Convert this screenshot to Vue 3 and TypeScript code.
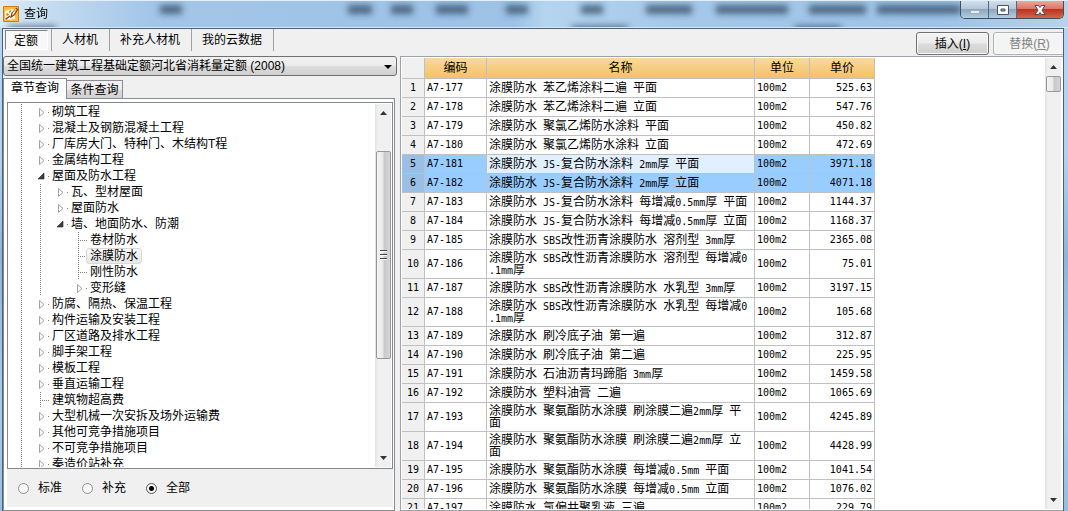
<script setup lang="ts">
import { ref } from 'vue'

interface TreeNode { label: string; level: number; kind: 'closed' | 'open' | 'leaf' }
interface Quota { code: string; name: string; price: string }

const tools = ['定额', '人材机', '补充人材机', '我的云数据']
const activeTool = ref('定额')
const pages = ['章节查询', '条件查询']
const activePage = ref('章节查询')
const scope = ref('全部')
const scopes = ['标准', '补充', '全部']
const library = ref('全国统一建筑工程基础定额河北省消耗量定额 (2008)')
const selectedNode = ref('涂膜防水')
const selectedCodes = ref(['A7-181', 'A7-182'])
const currentCode = ref('A7-181')

const nodes: TreeNode[] = [
  { label: '砌筑工程', level: 1, kind: 'closed' },
  { label: '混凝土及钢筋混凝土工程', level: 1, kind: 'closed' },
  { label: '厂库房大门、特种门、木结构T程', level: 1, kind: 'closed' },
  { label: '金属结构工程', level: 1, kind: 'closed' },
  { label: '屋面及防水工程', level: 1, kind: 'open' },
  { label: '瓦、型材屋面', level: 2, kind: 'closed' },
  { label: '屋面防水', level: 2, kind: 'closed' },
  { label: '墙、地面防水、防潮', level: 2, kind: 'open' },
  { label: '卷材防水', level: 3, kind: 'leaf' },
  { label: '涂膜防水', level: 3, kind: 'leaf' },
  { label: '刚性防水', level: 3, kind: 'leaf' },
  { label: '变形缝', level: 3, kind: 'closed' },
  { label: '防腐、隔热、保温工程', level: 1, kind: 'closed' },
  { label: '构件运输及安装工程', level: 1, kind: 'closed' },
  { label: '厂区道路及排水工程', level: 1, kind: 'closed' },
  { label: '脚手架工程', level: 1, kind: 'closed' },
  { label: '模板工程', level: 1, kind: 'closed' },
  { label: '垂直运输工程', level: 1, kind: 'closed' },
  { label: '建筑物超高费', level: 1, kind: 'leaf' },
  { label: '大型机械一次安拆及场外运输费', level: 1, kind: 'closed' },
  { label: '其他可竞争措施项目', level: 1, kind: 'closed' },
  { label: '不可竞争措施项目', level: 1, kind: 'closed' },
  { label: '秦造价站补充', level: 1, kind: 'closed' },
]

const quotas: Quota[] = [
  { code: 'A7-177', name: '涂膜防水 苯乙烯涂料二遍 平面', price: '525.63' },
  { code: 'A7-178', name: '涂膜防水 苯乙烯涂料二遍 立面', price: '547.76' },
  { code: 'A7-179', name: '涂膜防水 聚氯乙烯防水涂料 平面', price: '450.82' },
  { code: 'A7-180', name: '涂膜防水 聚氯乙烯防水涂料 立面', price: '472.69' },
  { code: 'A7-181', name: '涂膜防水 JS-复合防水涂料 2mm厚 平面', price: '3971.18' },
  { code: 'A7-182', name: '涂膜防水 JS-复合防水涂料 2mm厚 立面', price: '4071.18' },
  { code: 'A7-183', name: '涂膜防水 JS-复合防水涂料 每增减0.5mm厚 平面', price: '1144.37' },
  { code: 'A7-184', name: '涂膜防水 JS-复合防水涂料 每增减0.5mm厚 立面', price: '1168.37' },
  { code: 'A7-185', name: '涂膜防水 SBS改性沥青涂膜防水 溶剂型 3mm厚', price: '2365.08' },
  { code: 'A7-186', name: '涂膜防水 SBS改性沥青涂膜防水 溶剂型 每增减0\n.1mm厚', price: '75.01' },
  { code: 'A7-187', name: '涂膜防水 SBS改性沥青涂膜防水 水乳型 3mm厚', price: '3197.15' },
  { code: 'A7-188', name: '涂膜防水 SBS改性沥青涂膜防水 水乳型 每增减0\n.1mm厚', price: '105.68' },
  { code: 'A7-189', name: '涂膜防水 刷冷底子油 第一遍', price: '312.87' },
  { code: 'A7-190', name: '涂膜防水 刷冷底子油 第二遍', price: '225.95' },
  { code: 'A7-191', name: '涂膜防水 石油沥青玛蹄脂 3mm厚', price: '1459.58' },
  { code: 'A7-192', name: '涂膜防水 塑料油膏 二遍', price: '1065.69' },
  { code: 'A7-193', name: '涂膜防水 聚氨酯防水涂膜 刷涂膜二遍2mm厚 平\n面', price: '4245.89' },
  { code: 'A7-194', name: '涂膜防水 聚氨酯防水涂膜 刷涂膜二遍2mm厚 立\n面', price: '4428.99' },
  { code: 'A7-195', name: '涂膜防水 聚氨酯防水涂膜 每增减0.5mm 平面', price: '1041.54' },
  { code: 'A7-196', name: '涂膜防水 聚氨酯防水涂膜 每增减0.5mm 立面', price: '1076.02' },
  { code: 'A7-197', name: '涂膜防水 氯偏共聚乳液 三遍', price: '229.79' },
]

// Splits a name into Chinese runs and half-width runs
function runs(text: string) {
  return text.split(/([\x20-\x7e]+)/).filter(Boolean).map(t => ({ text: t, half: /^[\x20-\x7e]/.test(t) }))
}

function pick(code: string) {
  selectedCodes.value = [code]
  currentCode.value = code
}
</script>

<template>
  <div class="window">
    <header class="titlebar">
      <svg class="glass" aria-hidden="true">
        <defs><filter id="soft" x="-20%" y="-80%" width="140%" height="260%"><feGaussianBlur stdDeviation="3" /></filter></defs>
        <g filter="url(#soft)" fill="#1c3450">
          <path opacity=".65" d="M160 4h22v9h-22zM348 4h24v9h-24zM391 4h22v9h-22zM436 4h32v9h-32zM506 4h22v9h-22zM581 4h22v9h-22zM646 4h46v9h-46zM716 4h72v9h-72zM809 4h57v9h-57zM877 4h84v9h-84z" />
          <path opacity=".7" d="M8 25h48v6H8zM572 25h56v6h-56zM795 25h46v6h-46z" />
        </g>
      </svg>
      <svg class="logo" viewBox="0 0 16 16" aria-hidden="true">
        <rect width="16" height="16" rx="1" fill="#d9780a" />
        <rect x="1" y="1" width="14" height="14" fill="#f8bd3c" />
        <path d="M2 5l7-2 3 1v9l-7 1-3-3z" fill="#fffbe8" />
        <path d="M3 8l2-1 1 2-2 1zM6 5l2-1v2l-2 1zM7 10l2 1" fill="#d58518" />
        <path d="M14 2L9 7l-1 4 3-2 4-6M3 13l4-3" fill="none" stroke="#8f3b08" stroke-width="1.2" />
        <path d="M13 3l-3 4" stroke="#fff2aa" />
      </svg>
      <h1>查询</h1>
      <div class="controls">
        <button aria-label="最小化"><svg viewBox="0 0 14 12"><rect x="2.5" y="6.5" width="9" height="3" fill="#e8edf1" stroke="#a2afba" /></svg></button>
        <button aria-label="最大化"><svg viewBox="0 0 14 12"><path fill-rule="evenodd" d="M1.5 1.5h11v9h-11zM5 5v2h4V5z" fill="#fff" stroke="#485664" /></svg></button>
        <button class="close" aria-label="关闭"><svg viewBox="0 0 14 12"><path d="M2 1.500h3.500L7 3.500l1.500-2H12L9 6l3 4.500H8.500L7 8.500l-1.500 2H2L5 6z" fill="#fff" stroke="#59444a" /></svg></button>
      </div>
    </header>

    <div class="client">
      <div class="toolbar">
        <nav class="tools">
          <div v-for="t in tools" :key="t" class="tool-cell">
            <button :class="{ pressed: t === activeTool }" @click="activeTool = t">{{ t }}</button>
          </div>
        </nav>
        <div class="actions">
          <button class="action">插入<span>(<u>I</u>)</span></button>
          <button class="action" disabled>替换<span>(<u>R</u>)</span></button>
        </div>
      </div>

      <main class="content">
        <section class="side">
          <div class="combo">
            <select v-model="library" aria-label="定额库"><option>{{ library }}</option></select>
            <svg viewBox="0 0 8 4" aria-hidden="true"><path d="M0 0h8L4 4z" /></svg>
          </div>
          <div class="pages" role="tablist">
            <button v-for="p in pages" :key="p" role="tab" :aria-selected="p === activePage" :class="{ active: p === activePage }" @click="activePage = p">{{ p }}</button>
          </div>
          <div class="page">
            <div class="tree">
              <ul>
                <li v-for="n in nodes" :key="n.label">
                  <i v-for="g in n.level" :key="g" class="guide" :class="{ line: g < 3 }"></i>
                  <svg class="twisty" viewBox="0 0 12 16" aria-hidden="true">
                    <template v-if="n.kind === 'leaf'">
                      <path d="M.5 0v16" class="dots" />
                      <path d="M2 8.500h8" class="dots" />
                    </template>
                    <template v-else>
                      <path v-if="n.kind === 'closed'" d="M-.5 4.500v8l4.500-4z" fill="#fff" stroke="#a0a0a0" />
                      <path v-else d="M4 5v6h-6z" fill="#404040" stroke="#222" stroke-width=".6" />
                      <path d="M8 8h1v1H8z" fill="#808080" />
                    </template>
                  </svg>
                  <button :class="{ selected: n.label === selectedNode }" @click="selectedNode = n.label">{{ n.label }}</button>
                </li>
              </ul>
              <div class="scroll" aria-hidden="true">
                <svg class="arrow" viewBox="0 0 7 4"><path d="M0 4h7L3.500 0z" /></svg>
                <div class="track"><div class="thumb tree-thumb"><i></i><i></i><i></i></div></div>
                <svg class="arrow" viewBox="0 0 7 4"><path d="M0 0h7L3.500 4z" /></svg>
              </div>
            </div>
            <div class="scopes">
              <label v-for="s in scopes" :key="s"><input v-model="scope" type="radio" name="scope" :value="s">{{ s }}</label>
            </div>
          </div>
        </section>

        <section class="grid">
          <div class="sheet">
            <table>
              <colgroup><col class="c-no"><col class="c-code"><col class="c-name"><col class="c-unit"><col class="c-price"></colgroup>
              <thead>
                <tr><th class="corner"></th><th>编码</th><th>名称</th><th>单位</th><th>单价</th></tr>
              </thead>
              <tbody>
                <tr v-for="(q, i) in quotas" :key="q.code" :class="{ selected: selectedCodes.includes(q.code), current: q.code === currentCode }" @click="pick(q.code)">
                  <th scope="row" class="half">{{ i + 1 }}</th>
                  <td class="half">{{ q.code }}</td>
                  <td class="name"><span v-for="(r, k) in runs(q.name)" :key="k" :class="{ half: r.half }">{{ r.text }}</span></td>
                  <td class="half">100m2</td>
                  <td class="half price">{{ q.price }}</td>
                </tr>
              </tbody>
            </table>
          </div>
          <div class="scroll" aria-hidden="true">
            <svg class="arrow" viewBox="0 0 7 4"><path d="M0 4h7L3.500 0z" /></svg>
            <div class="track"><div class="thumb grid-thumb"></div></div>
            <svg class="arrow" viewBox="0 0 7 4"><path d="M0 0h7L3.500 4z" /></svg>
          </div>
        </section>
      </main>
    </div>
  </div>
</template>

<style>
body { margin: 0; overflow: hidden; }
</style>

<style scoped>
* { box-sizing: border-box; }
button, select, input { font: inherit; color: inherit; margin: 0; }
button { padding: 0; border: 0; background: none; white-space: nowrap; }
.window {
  display: flex; flex-direction: column; height: 100vh; padding: 0 4px 0 2px; overflow: hidden;
  font: 12px/16px "Liberation Sans", "Noto Sans CJK SC", sans-serif; color: #000;
  background: linear-gradient(#b5d5f1, #b2d2f0 30%, #8fb5dc 50%, #a9ccec 80%, #96bde3);
}
.titlebar {
  position: relative; display: flex; align-items: center; flex: none; height: 28px; margin: 0 -4px 0 -2px;
  border-top: 1px solid #e4eef7; border-bottom: 1px solid #d5e7f8;
  background: linear-gradient(90deg, #dcebf8, #c3dbf0 5%, #a3c6e8 14%, #9dc2e6 48%, #b4d4ef 51%, #a5c8e9 64%, #9ec3e6 88%, #b8d2ea);
}
.glass { position: absolute; left: 0; top: 0; width: 100%; height: 100%; }
.logo { position: relative; width: 16px; height: 16px; margin-left: 3px; }
h1 { position: relative; margin: 0 auto 0 5px; font: inherit; }
.controls {
  position: relative; display: flex; align-self: flex-start; height: 18px; margin-right: 4px;
  border: 1px solid #3e4f61; border-top: 0; border-radius: 0 0 5px 5px; overflow: hidden;
}
.controls button { width: 28px; border-right: 1px solid #566a7f; background: linear-gradient(#cfdfee, #b5c8da 45%, #8da7bf 50%, #b2cce2); }
.controls button.close { width: 46px; border: 0; background: linear-gradient(#e9a99c, #d97767 45%, #bd331e 50%, #cf6650); }
.controls svg { display: block; width: 14px; height: 12px; margin: 0 auto; }

.client { display: flex; flex-direction: column; flex: 1; min-height: 0; border: 1px solid #4c6078; border-bottom: 0; background: #f0f0f0; }
.toolbar { display: flex; justify-content: space-between; flex: none; height: 27px; overflow: hidden; }
.tools { display: flex; }
.tool-cell { height: 22px; padding: 1px 3px 0 2px; border-right: 1px solid #a0a0a0; }
.tool-cell button { height: 20px; padding: 0 8px; }
.tool-cell button.pressed {
  border: 1px solid; border-color: #808080 #fff #fff #808080; background: #f8f8f8; padding: 2px 9px 0 8px;
}
.actions { display: flex; gap: 4px; padding-top: 3px; margin-right: -3px; }
.action {
  width: 73px; height: 23px; border: 1px solid #707070; border-radius: 3px;
  background: linear-gradient(#f4f4f4, #ebebeb 48%, #dcdcdc 52%, #cfcfcf); box-shadow: inset 0 0 0 1px #fafafa;
}
.action:disabled { color: #838383; border-color: #adb2b5; background: #f4f4f4; }

.content { display: flex; gap: 3px; flex: 1; min-height: 0; }
.side { display: flex; flex-direction: column; flex: none; width: 394px; }
.combo { position: relative; height: 20px; flex: none; }
.combo select {
  display: block; appearance: none; width: 100%; height: 20px; padding: 0 20px 0 3px; border: 1px solid #707070; border-radius: 3px;
  background: linear-gradient(#f2f2f2, #ebebeb 48%, #dddddd 52%, #cfcfcf);
}
.combo svg { position: absolute; right: 5px; top: 9px; width: 8px; height: 4px; }
.pages { display: flex; align-items: flex-end; flex: none; height: 22px; padding-top: 2px; margin-right: 2px; }
.pages button { height: 18px; width: 56px; padding: 0 2px; border: 1px solid #898c95; border-left: 0; border-bottom: 0; background: linear-gradient(#f2f2f2, #ebebeb 50%, #dcdcdc 52%, #d0d0d0); }
.pages button.active { position: relative; height: 21px; width: 64px; margin-bottom: -1px; padding-bottom: 2px; border-left: 1px solid #898c95; background: #fff; }
.page { display: flex; flex-direction: column; flex: 1; min-height: 0; margin-right: 2px; padding: 3px 1px 3px 3px; border: 1px solid #898c95; background: #fff; }
.tree { display: flex; flex: 1; min-height: 0; padding: 1px 1px 1px 0; border: 1px solid #828790; background: #fff; overflow: hidden; }
ul { flex: 1; min-width: 0; margin: 0; padding: 0 0 0 13px; list-style: none; overflow: hidden; }
li { display: flex; height: 16px; white-space: nowrap; }
.guide { flex: none; width: 19px; }
.guide.line { background: repeating-linear-gradient(#808080 0 1px, transparent 1px 2px) left / 1px 100% no-repeat; }
li:has(.guide:nth-of-type(1):last-of-type) .guide { margin-right: 0; }
.twisty { flex: none; width: 12px; height: 16px; overflow: visible; }
.dots { fill: none; stroke: #808080; stroke-dasharray: 1 1; }
li button { height: 16px; line-height: 16px; }
li button.selected { margin-left: -4px; padding: 0 3px; border: 1px solid #d9d9d9; border-radius: 3px; line-height: 14px; background: linear-gradient(#fafafa, #e6e6e6); }
.scopes { display: flex; align-items: center; gap: 20px; flex: none; height: 38px; padding-left: 11px; background: #f0f0f0; }
.scopes label { display: flex; align-items: center; gap: 9px; }
.scopes input { appearance: none; width: 11px; height: 11px; border: 1px solid #8e8f8f; border-radius: 50%; background: #f6f6f6; }
.scopes input:checked { border-color: #555; background: radial-gradient(circle, #000 0 2px, #f6f6f6 3px); }

.scroll { display: flex; flex-direction: column; align-items: center; flex: none; width: 16px; padding: 7px 0; background: linear-gradient(90deg, #e3e3e3, #f0f0f0 20%, #f0f0f0); }
.arrow { flex: none; width: 7px; height: 4px; fill: #333; }
.track { display: flex; flex-direction: column; flex: 1; width: 15px; min-height: 0; }
.thumb { display: flex; flex-direction: column; align-items: center; justify-content: center; gap: 2px; border: 1px solid #979797; border-radius: 2px; background: linear-gradient(90deg, #f5f5f5, #e9e9eb 45%, #c8c8cb 55%, #d6d6d8); }
.thumb i { width: 7px; height: 2px; border-top: 1px solid #444; background: #fff; }
.tree-thumb { height: 61%; margin-top: 36px; }
.grid-thumb { height: 16px; margin-top: 7px; }

.grid { display: flex; flex: 1; min-width: 0; padding: 1px 2px 1px 1px; border: 1px solid #a0a0a8; border-right: 0; background: #fff; }
.sheet { flex: 1; min-width: 0; overflow: hidden; }
table { table-layout: fixed; width: 473px; border-spacing: 0; line-height: 12px; }
.c-no { width: 23px; } .c-code { width: 62px; } .c-name { width: 268px; } .c-unit { width: 55px; } .c-price { width: 65px; }
th, td { height: 19px; padding: 2px; border-right: 1px solid #c0c0c0; border-bottom: 1px solid #c0c0c0; text-align: left; font-weight: normal; vertical-align: middle; white-space: nowrap; }
thead th { height: 21px; text-align: center; background: linear-gradient(#fad99c, #f2c266); }
thead th.corner, tbody th { text-align: center; background: #f0f0f0; }
.half { font-family: "DejaVu Sans Mono", monospace; font-size: 10px; }
.name { white-space: pre; }
.name .half { line-height: 0; }
td.price { text-align: right; }
tr.selected td { background: #99ccff; }
tr.selected th { background: #9bbfe4; }
tr.current td.name { background: #e0f0ff; }
</style>
